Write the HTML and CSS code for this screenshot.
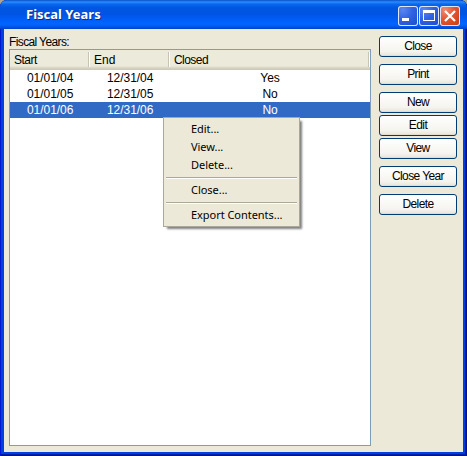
FILE: index.html
```html
<!DOCTYPE html>
<html lang="en">
<head>
<meta charset="utf-8">
<title>Fiscal Years</title>
<link rel="stylesheet" href="styles.css">
</head>
<body>
<div class="window">
  <header class="titlebar">
    <h1>Fiscal Years</h1>
    <div class="controls">
      <span class="ctl"><svg width="20" height="20"><path d="M4 12h7v3H4z" fill="#fff"/></svg></span>
      <span class="ctl"><svg width="20" height="20"><path d="M4 4h12v11H4zM5 7v7h10V7z" fill="#fff" fill-rule="evenodd"/></svg></span>
      <span class="ctl ctl-close"><svg width="20" height="20"><path d="M5 5l10 10M15 5L5 15" stroke="#fff" stroke-width="2.2"/></svg></span>
    </div>
  </header>
  <div class="content">
    <main class="main">
      <div class="label"><span class="t-label">Fiscal Years:</span></div>
      <div class="list">
        <div class="row head"><span class="t-start">Start</span><span>End</span><span class="t-closed">Closed</span></div>
        <div class="row"><span>01/01/04</span><span>12/31/04</span><span>Yes</span></div>
        <div class="row"><span>01/01/05</span><span>12/31/05</span><span>No</span></div>
        <div class="row selected"><span>01/01/06</span><span>12/31/06</span><span>No</span></div>
      </div>
    </main>
    <aside class="buttons">
      <button class="gap">Close</button>
      <button class="gap">Print</button>
      <button>New</button>
      <button>Edit</button>
      <button class="gap">View</button>
      <button class="gap">Close Year</button>
      <button>Delete</button>
    </aside>
  </div>
  <div class="menu">
    <div class="item">Edit...</div>
    <div class="item">View...</div>
    <div class="item">Delete...</div>
    <div class="sep"></div>
    <div class="item">Close...</div>
    <div class="sep"></div>
    <div class="item">Export Contents...</div>
  </div>
</div>
</body>
</html>
```
FILE: styles.css
```css
* { box-sizing: border-box; }
body {
  margin: 0;
  background: #a9a695;
  font: 12px/16px "Liberation Sans", Arial, sans-serif;
  color: #000;
}
.window {
  position: relative;
  display: flex;
  flex-direction: column;
  width: 467px;
  height: 456px;
  padding: 0 4px 4px;
  border-radius: 7px 7px 0 0;
  overflow: hidden;
  background: #0040e0;
  box-shadow: inset 1px 0 #0019cf, inset -1px 0 #00138c, inset -2px 0 #001ea0, inset 0 -1px #00138c, inset 0 -2px #001ea0;
}
.titlebar {
  display: flex;
  align-items: center;
  justify-content: space-between;
  height: 29px;
  margin: 0 -4px;
  padding: 2px 7px 0 26px;
  flex: none;
  background: linear-gradient(#0a50c8 0, #2a8cff 2px, #0a68f0 4px, #0055e0 8px, #0054e3 14px, #005cf5 19px, #0066ff 24px, #005cf0 26px, #0040c8 29px);
}
.titlebar h1 {
  margin: -4px 0 0;
  font: bold 13px/18px "Noto Sans", sans-serif;
  letter-spacing: 0;
  color: #fff;
  text-shadow: 1px 1px #0a2d8c;
}
.controls { display: flex; gap: 1px; padding-top: 1px; }
.ctl {
  width: 20px;
  height: 20px;
  border-radius: 3px;
  background: radial-gradient(circle at 25% 20%, #5a86f0 0, #2f62e2 45%, #1d49cc 100%);
  box-shadow: inset 0 0 0 1px #dfe8fb;
}
.ctl svg { display: block; }
.ctl-close { background: radial-gradient(circle at 25% 20%, #ee8c70 0, #e2552e 45%, #c43a12 100%); }
.content {
  display: flex;
  flex: 1;
  justify-content: space-between;
  padding: 5px 6px 6px 5px;
  background: #ece9d8;
}
.main { display: flex; flex-direction: column; width: 362px; }
.label { height: 15px; }
.t-label { letter-spacing: -0.62px; }
.list { flex: 1; border: 1px solid #7f9db9; background: #fff; }
.row {
  display: grid;
  grid-template-columns: 80px 80px 1fr;
  height: 16px;
}
.row:not(.head) { letter-spacing: -0.05px; }
.row:not(.head) span:nth-child(1) { padding-left: 17px; }
.row:not(.head) span:nth-child(2) { padding-left: 17px; }
.row:not(.head) span:nth-child(3) { text-align: center; }
.head {
  height: 20px;
  background: linear-gradient(#ebeadb 16px, #e2decd 17px, #d6d2c2 18px, #cbc7b8 20px);
}
.head span {
  height: 15px;
  margin: 2px 1px 0 0;
  padding-left: 4px;
  border-right: 1px solid #c7c5b2;
  box-shadow: 1px 0 #fff;
  line-height: 16px;
}
.t-start { letter-spacing: -0.5px; }
.t-closed { letter-spacing: -0.55px; }
.selected { background: #316ac5; color: #fff; }
.buttons { display: flex; flex-direction: column; gap: 2px; width: 78px; padding-top: 2px; }
.buttons button {
  width: 78px;
  height: 21px;
  margin: 0;
  padding: 0 0 2px;
  border: 1px solid #003c74;
  border-radius: 3px;
  background: linear-gradient(#fff, #f5f4ee 75%, #ece9df 92%, #dcd7cb);
  font: inherit;
  color: #000;
  letter-spacing: -0.6px;
}
.buttons .gap { margin-bottom: 5px; }
.menu {
  position: absolute;
  left: 163px;
  top: 117px;
  width: 137px;
  height: 110px;
  padding: 2px;
  border: 1px solid #aca899;
  background: #ece9d8;
  box-shadow: 3px 3px 2px -1px rgba(0, 0, 0, 0.5);
  font: 11px/18px "Noto Sans", sans-serif;
}
.item { height: 18px; padding-left: 25px; white-space: nowrap; letter-spacing: -0.04px; }
.sep { height: 2px; margin: 3px 0 2px; border-top: 1px solid #aca899; border-bottom: 1px solid #fff; }
```
